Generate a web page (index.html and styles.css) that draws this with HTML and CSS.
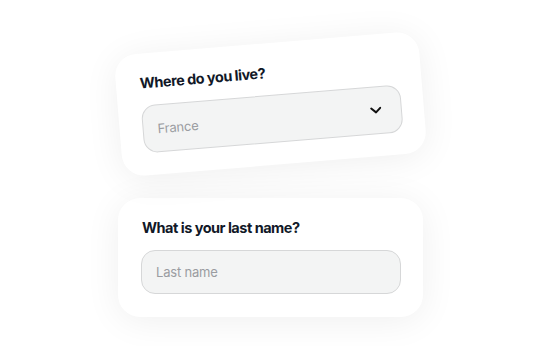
FILE: index.html
```html
<!DOCTYPE html>
<html>
<head>
<meta charset="utf-8">
<link rel="stylesheet" href="styles.css">
</head>
<body>
<main class="stage">
  <section class="card card--tilted">
    <h2 class="question">Where do you live?</h2>
    <div class="field field--select">
      <span class="placeholder">France</span>
      <svg class="chevron" width="12" height="8" viewBox="0 0 12 8"><path d="M1.5 1.8 L6 6 L10.5 1.8" fill="none" stroke="#111" stroke-width="2" stroke-linecap="round" stroke-linejoin="round"/></svg>
    </div>
  </section>
  <section class="card">
    <h2 class="question">What is your last name?</h2>
    <div class="field">
      <span class="placeholder">Last name</span>
    </div>
  </section>
</main>
</body>
</html>
```
FILE: styles.css
```css
html, body {
  margin: 0;
  padding: 0;
  background: #ffffff;
}
body {
  width: 552px;
  height: 346px;
  overflow: hidden;
  font-family: Inter, "Noto Sans", sans-serif;
}
.stage {
  display: flex;
  flex-direction: column;
  gap: 33px;
  padding: 43px 0 0 118px;
}
.card {
  width: 305px;
  box-sizing: border-box;
  background: #ffffff;
  border-radius: 22px;
  padding: 20px 22px 23px 23px;
  box-shadow: 0 4px 36px rgba(0, 0, 0, 0.065);
}
.card--tilted {
  transform: rotate(-4.7deg);
  padding-bottom: 22px;
}
.question {
  margin: 0 0 12px 1px;
  font-size: 14.5px;
  line-height: 20px;
  font-weight: 700;
  letter-spacing: -0.5px;
  color: #111827;
}
.field {
  height: 44px;
  box-sizing: border-box;
  border: 1px solid #d6d7d8;
  background: #f3f4f4;
  border-radius: 14px;
  display: flex;
  align-items: center;
  justify-content: space-between;
  padding: 0 19px 0 14px;
}
.field--select {
  height: 48px;
}
.placeholder {
  font-size: 13px;
  letter-spacing: -0.2px;
  color: #9a9ca1;
}
.chevron {
  display: block;
}
```
